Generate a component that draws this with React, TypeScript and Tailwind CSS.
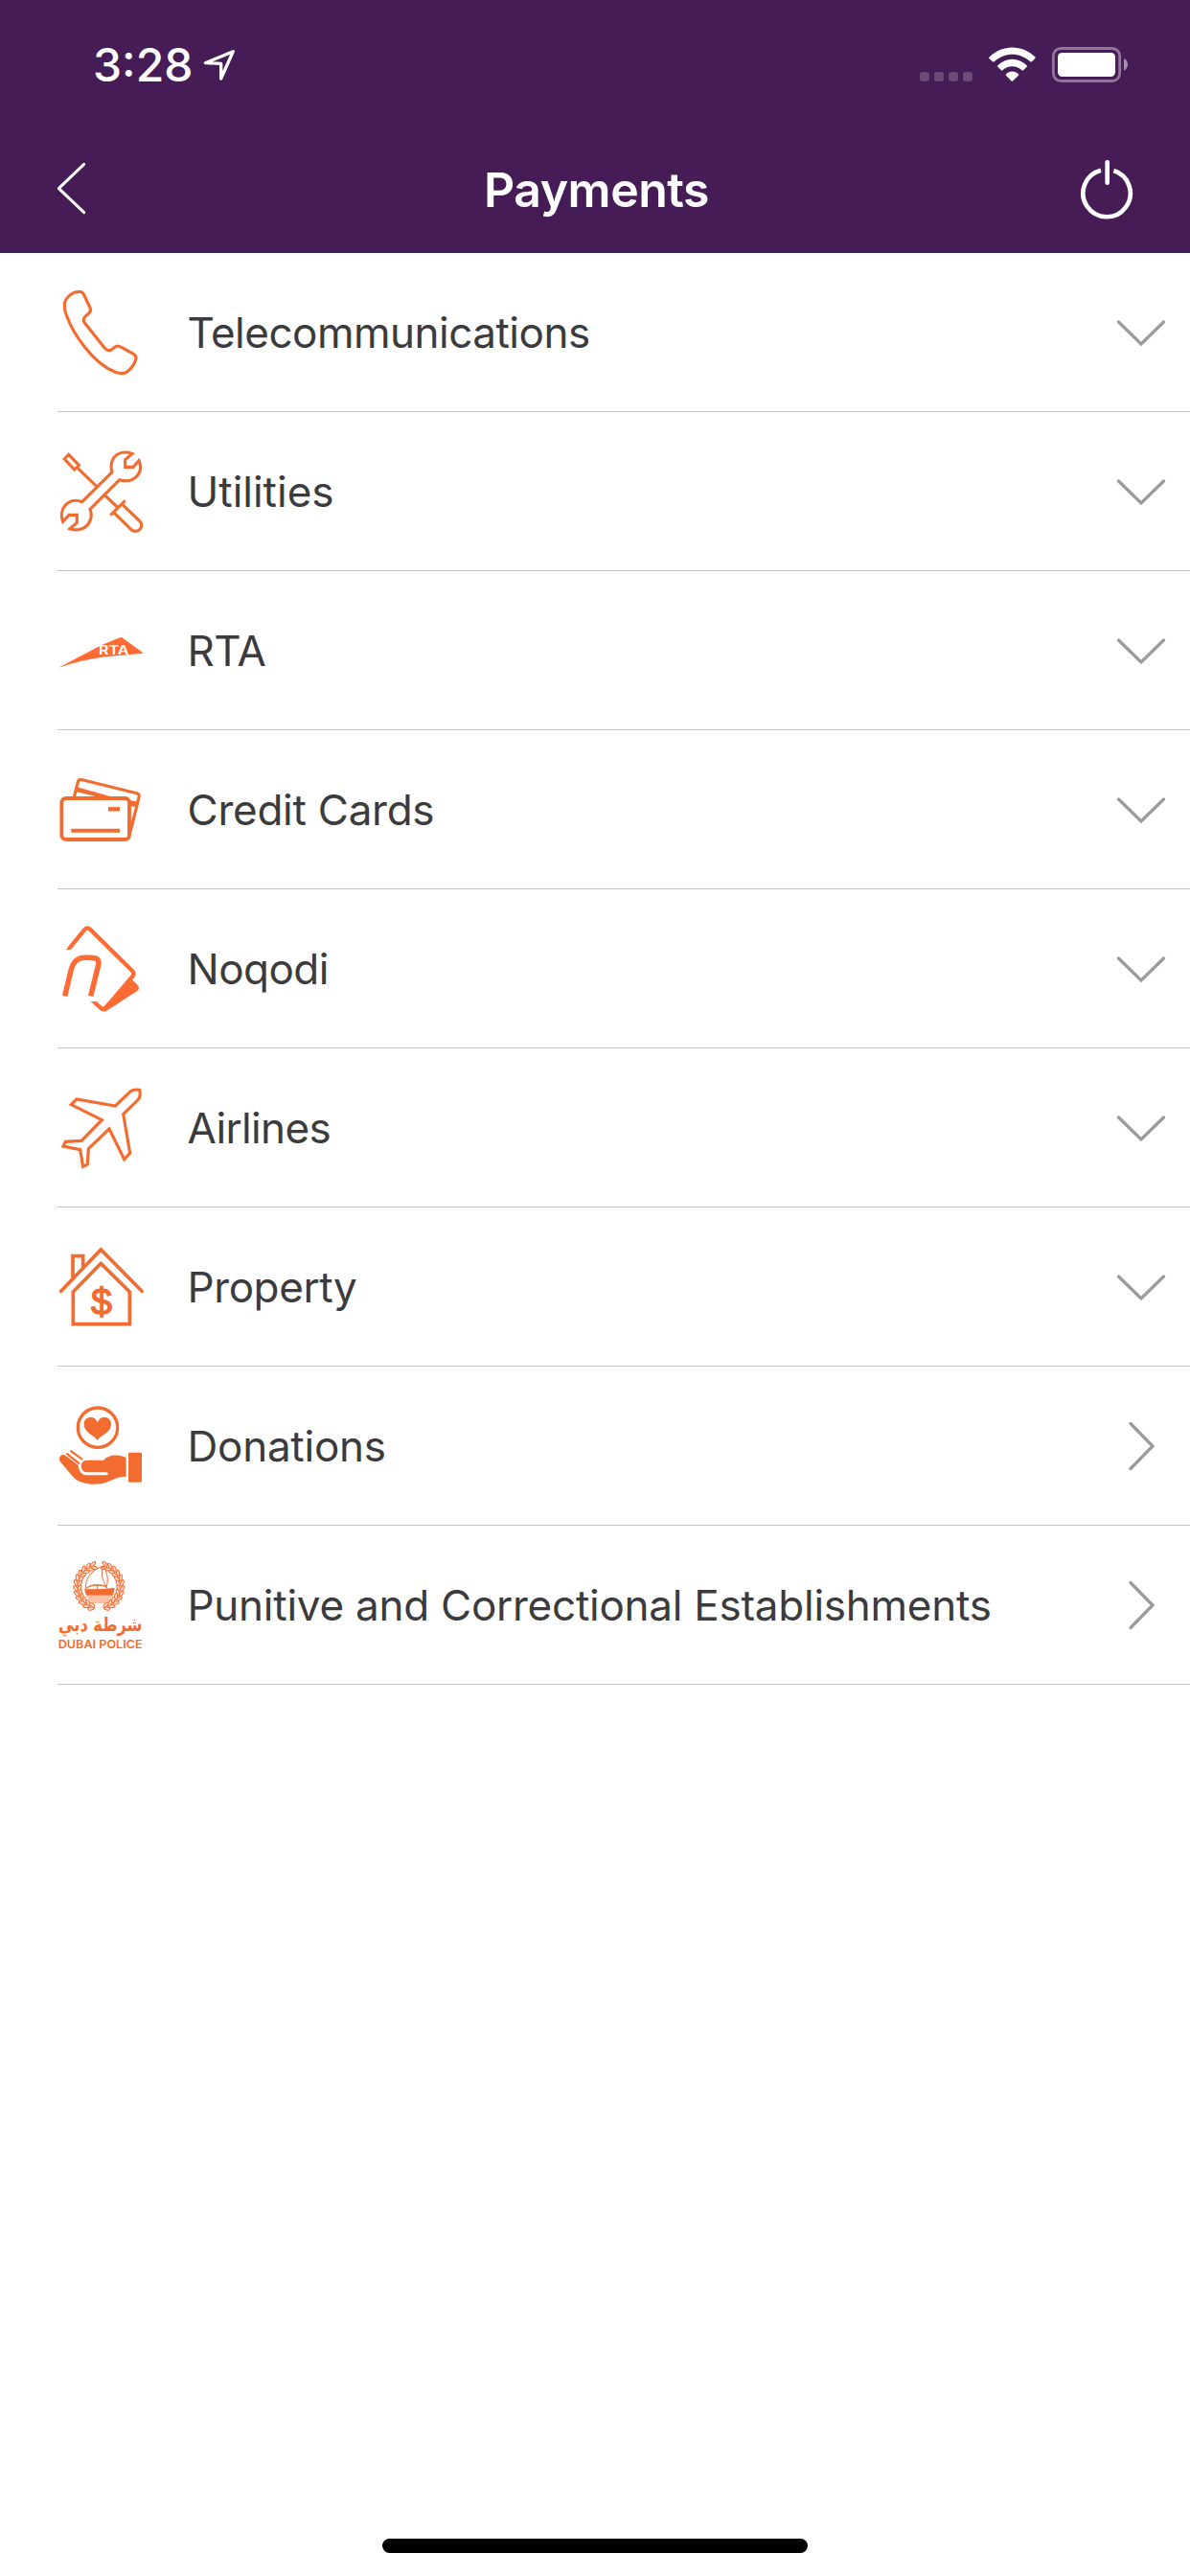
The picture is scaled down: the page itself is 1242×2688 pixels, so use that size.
import type { ReactNode } from "react";

const ORANGE = "#f26c30";
const BRIGHT_ORANGE = "#ff6b33";

interface Category {
  label: string;
  icon: ReactNode;
  expandable: boolean;
  tracking: string;
}

function PhoneIcon() {
  return (
    <svg viewBox="42 48 306 306" className="w-[102px] h-[102px]" fill="none" stroke={ORANGE} strokeWidth="9.5" strokeLinejoin="round">
      <path d="M82 113 C83 91 109 72 130 73 C136 73 139 76 142 81 L162 123 C165 130 163 137 157 142 C149 148 142 153 142 160 C141 164 143 168 146 172 L203 244 C209 252 214 257 222 257 C233 257 237 243 248 243 C253 243 258 246 262 248 L298 268 C306 273 308 280 304 289 C299 302 288 317 276 325 C266 331 252 329 241 325 C171 298 109 205 88 147 C84 137 81 126 82 113 Z" />
    </svg>
  );
}

function ToolsIcon() {
  return (
    <svg viewBox="42 546 306 306" className="w-[102px] h-[102px]" fill="none" stroke={ORANGE} strokeWidth="9.5">
      {/* screwdriver */}
      <path d="M95 583 L82 597 L113 630 L127 616 Z M120 622 L185 685 M207 709 L250 750 M226 773 L272 727 M236 764 L290 817 C299 826 312 825 319 816 C325 808 324 798 317 791 L263 739" />
      {/* wrench */}
      <path d="M137 731 L231 638 C220 602 241 576 272 576 C281 576 287 577 294 580 L272 599 V622 H297 L315 602 C323 620 320 638 308 651 C294 666 274 668 254 662 L162 754 C174 785 154 814 126 818 C116 819 107 818 99 815 L121 796 V772 H96 L77 793 C70 775 73 754 86 740 C100 726 119 724 137 731 Z" />
    </svg>
  );
}

function RtaIcon() {
  return (
    <svg viewBox="42 -36 306 306" className="w-[102px] h-[102px]">
      <path d="M63 170 L200 98 L260 74 L330 125 L210 136 C160 143 110 154 63 170 Z" fill={BRIGHT_ORANGE} />
      <text x="189" y="130" textLength="94" lengthAdjust="spacingAndGlyphs" fontSize="38" fontWeight="600" fill="#fff" className="font-['Inter',sans-serif]">
        RTA
      </text>
    </svg>
  );
}

function CardsIcon() {
  return (
    <svg viewBox="42 462 306 306" className="w-[102px] h-[102px]" fill="none" stroke={ORANGE} strokeWidth="11.5">
      <path d="M112 576 L124 528 C126 521 131 519 138 521 L308 563 C315 565 317 569 315 576 L287 688" strokeWidth="9.5" />
      <path d="M118 543 L222 572 L312 590 V606 L278 602 L262 578 H200 L118 558 Z" fill={ORANGE} stroke="none" />
      <rect x="73" y="579" width="212" height="129" rx="13" fill="#fff" />
      <path d="M219 613 H255" strokeWidth="13" />
      <path d="M103 680 H255" strokeWidth="12" />
    </svg>
  );
}

function NoqodiIcon() {
  return (
    <svg viewBox="42 30 306 306" className="w-[102px] h-[102px]" fill="none" stroke={BRIGHT_ORANGE} strokeWidth="13">
      <path d="M97 119 L144 61 Q153 50 163 60 L294 189 Q302 197 296 205 L213 303 Q204 314 195 305 L176 288" />
      <path d="M86 123 H100 L106 113 L97 112 Z M163 285 H184 L180 296 Z" fill={BRIGHT_ORANGE} stroke="none" />
      <path d="M293 216 L312 235 Q318 243 311 251 L209 317 L200 306 Z" fill={BRIGHT_ORANGE} stroke="none" />
      <path d="M83 268 L102 188 C109 161 121 149 143 148 C157 147 170 147 180 150 C188 153 190 160 188 171 L164 268" strokeWidth="16.500" />
    </svg>
  );
}

function PlaneIcon() {
  return (
    <svg viewBox="42 528 306 306" className="w-[102px] h-[102px]" fill="none" stroke={ORANGE} strokeWidth="9.5">
      <path d="M241 612 L287 568 C294 561 306 560 317 562 C320 575 318 587 311 594 L266 638 L287 760 L269 779 L222 684 L157 746 L154 795 L140 802 L131 749 L78 738 L85 724 L135 721 L199 656 L103 608 L120 591 Z" />
    </svg>
  );
}

function HouseIcon() {
  return (
    <svg viewBox="42 36 306 306" className="w-[102px] h-[102px]" fill="none" stroke={ORANGE} strokeWidth="11">
      <path d="M71 202 L196 72 L324 202" strokeLinecap="round" />
      <path d="M108 160 V92 H140 V126" />
      <path d="M109 305 V204 L196 115 L286 204 V305 Z" />
      <text x="198" y="277" textAnchor="middle" fontSize="118" fill={ORANGE} stroke={ORANGE} strokeWidth="4" className="font-['Liberation_Sans',sans-serif]">
        $
      </text>
    </svg>
  );
}

function DonationIcon() {
  return (
    <svg viewBox="42 54 306 306" className="w-[102px] h-[102px]" fill={ORANGE}>
      <circle cx="186" cy="149" r="62" fill="none" stroke={ORANGE} strokeWidth="10" />
      <path d="M185 190 C178 174 143 166 143 139 C143 113 175 107 185 133 C195 107 228 113 228 139 C228 166 192 174 185 190 Z" />
      {/* hand and cuff */}
      <path d="M66 245 C68 233 79 231 89 239 L125 267 C126 283 134 297 150 298 H210 C216 298 220 295 218 291 C214 289 208 289 201 289 H153 C142 289 134 280 134 270 C134 259 141 251 154 251 H205 C215 235 253 229 275 244 V302 C241 303 223 319 197 325 C166 329 136 324 119 312 C100 296 82 269 70 257 C66 253 65 250 66 245 Z" />
      <path d="M91 232 L126 260 M103 223 L136 247" stroke={ORANGE} strokeWidth="7" strokeLinecap="round" />
      <rect x="282" y="227" width="42" height="93" rx="4" />
    </svg>
  );
}

function PoliceIcon() {
  const leaves: ReactNode[] = [];
  for (let i = 0; i < 12; i++) {
    const angle = 18 + i * 13.2;
    for (const side of [1, -1]) {
      leaves.push(
        <g key={`${side}-${i}`} transform={`translate(190 167) scale(${side} 1) rotate(${angle})`}>
          <ellipse cx="-4" cy="-73" rx="10" ry="4.500" transform="rotate(28 -4 -73)" />
          <ellipse cx="-4" cy="-61" rx="10" ry="4.500" transform="rotate(-28 -4 -61)" />
        </g>
      );
    }
  }
  return (
    <svg viewBox="42 72 306 306" className="w-[102px] h-[102px] overflow-visible">
      <g fill="#fde0d3" stroke={ORANGE} strokeWidth="3">{leaves}</g>
      <g fill="none" stroke={ORANGE} strokeWidth="3">
        <path d="M203 102 C171 112 145 139 148 174 C163 158 191 158 214 166 C220 143 216 122 203 102 Z" />
        <path d="M203 102 C196 122 198 146 216 172 M152 172 C164 161 201 158 214 170 M185 162 V174" />
        <path d="M152 198 H232 M155 204 H228 M160 210 H224 M168 216 H216" strokeWidth="2.5" />
      </g>
      <path d="M144 175 L205 174 L239 170 L234 194 H150 Z" fill={ORANGE} />
      <text x="194" y="307" textAnchor="middle" textLength="262" lengthAdjust="spacingAndGlyphs" direction="rtl" fontSize="60" fontWeight="700" fill={ORANGE} className="font-['DejaVu_Sans',sans-serif]">
        شرطة دبي
      </text>
      <text x="62" y="360" textLength="264" lengthAdjust="spacingAndGlyphs" fontSize="37" fontWeight="600" fill={ORANGE} className="font-['Inter',sans-serif]">
        DUBAI POLICE
      </text>
    </svg>
  );
}

const categories: Category[] = [
  { label: "Telecommunications", icon: <PhoneIcon />, expandable: true, tracking: "tracking-[-0.5px]" },
  { label: "Utilities", icon: <ToolsIcon />, expandable: true, tracking: "tracking-normal" },
  { label: "RTA", icon: <RtaIcon />, expandable: true, tracking: "tracking-[-0.5px]" },
  { label: "Credit Cards", icon: <CardsIcon />, expandable: true, tracking: "tracking-[-0.25px]" },
  { label: "Noqodi", icon: <NoqodiIcon />, expandable: true, tracking: "tracking-[-0.5px]" },
  { label: "Airlines", icon: <PlaneIcon />, expandable: true, tracking: "tracking-[-0.65px]" },
  { label: "Property", icon: <HouseIcon />, expandable: true, tracking: "tracking-[-0.4px]" },
  { label: "Donations", icon: <DonationIcon />, expandable: false, tracking: "tracking-[-0.25px]" },
  {
    label: "Punitive and Correctional Establishments",
    icon: <PoliceIcon />,
    expandable: false,
    tracking: "tracking-[-0.25px]",
  },
];

function StatusBar() {
  return (
    <div className="h-[132px] pl-[97px] pr-[64px] pt-[38px] flex items-start justify-between">
      <div className="flex items-start">
        <span className="w-[115px] text-[48px] leading-[60px] font-medium whitespace-nowrap">3:28</span>
        <svg viewBox="636 150 102 105" className="w-[34px] h-[35px] mt-3" fill="none" stroke="#fff" strokeWidth="10" strokeLinejoin="round">
          <path d="M643 197 L730 161 L692 246 V199 Z" />
        </svg>
      </div>
      <svg viewBox="411 144 657 117" className="w-[219px] h-[39px] mt-[10px]" fill="#fff">
        <g opacity="0.2">
          <rect x="414" y="225" width="30" height="30" rx="9" />
          <rect x="459" y="225" width="30" height="30" rx="9" />
          <rect x="504" y="225" width="30" height="30" rx="9" />
          <rect x="549" y="225" width="30" height="30" rx="9" />
        </g>
        {/* wifi */}
        <path d="M631 179 C673 138 734 138 776 179 Q777 181 775 183 L765 193 Q763 195 760 193 C726 163 681 163 647 193 Q644 195 642 193 L631 183 Q630 181 631 179 Z" />
        <path d="M658 205 C684 179 723 179 749 205 Q751 207 749 209 L738 220 Q736 222 734 220 C715 204 691 204 673 220 Q671 222 669 220 L658 209 Q656 207 658 205 Z" />
        <path d="M684 232 C696 221 711 221 723 232 Q725 234 723 236 L706 253 Q703 256 700 253 L684 236 Q682 234 684 232 Z" />
        {/* battery */}
        <rect x="832" y="151.500" width="208" height="102" rx="24" fill="none" stroke="#fff" strokeOpacity="0.4" strokeWidth="8.500" />
        <rect x="846" y="165" width="180" height="75" rx="14" />
        <path d="M1053 183 C1069 189 1069 215 1053 221 Z" opacity="0.5" />
      </svg>
    </div>
  );
}

function NavBar() {
  return (
    <div className="h-[132px] px-[57px] flex items-center justify-between">
      <svg viewBox="171 501 102 177" className="w-[34px] h-[59px] -mt-[3px]" fill="none" stroke="#fff" strokeWidth="9" strokeLinecap="round" strokeLinejoin="round">
        <path d="M263 514 L184 590 L263 665" />
      </svg>
      <h1 className="pl-[29px] text-[50px] leading-[60px] font-semibold tracking-[-0.5px]">Payments</h1>
      <svg viewBox="909 492 180 201" className="w-[60px] h-[67px]" fill="none" stroke="#fff" strokeWidth="14">
        <path d="M981 530 A74 74 0 1 0 1021 531" />
        <path d="M1001 505 V569" strokeLinecap="round" />
      </svg>
    </div>
  );
}

function CategoryRow({ label, icon, expandable, tracking }: Category) {
  return (
    <li className="border-none flex flex-col">
      <div className="h-[165px] pl-[54px] flex">
        <div className="w-[102px] h-[166px] flex items-center shrink-0">{icon}</div>
        <div className="flex-1 h-[166px] pl-[39.5px] flex items-center">
          <span className={`text-[44px] leading-[56px] text-[#3b3b3d] whitespace-nowrap ${tracking}`}>{label}</span>
        </div>
        <div className="w-[106px] h-[166px] pl-1 flex items-center justify-center shrink-0">
          <svg
            viewBox="0 0 52 52"
            className={`w-[52px] h-[52px] ${expandable ? "" : "-rotate-90"}`}
            fill="none"
            stroke="#9b9b9b"
            strokeWidth="3.3"
            strokeLinecap="round"
          >
            <path d="M2.500 15 L26 38 L49.500 15" />
          </svg>
        </div>
      </div>
      <div className="h-px ml-[60px] bg-[#c4c4c6]" />
    </li>
  );
}

export default function App() {
  return (
    <div className="w-[1242px] h-[2688px] bg-white flex flex-col overflow-hidden font-['Inter',sans-serif]">
      <header className="h-[264px] bg-[#461c56] text-white shrink-0">
        <StatusBar />
        <NavBar />
      </header>
      <ul>
        {categories.map((c) => (
          <CategoryRow key={c.label} {...c} />
        ))}
      </ul>
      {/* Home indicator */}
      <div className="mt-auto mb-6 mx-auto w-[444px] h-[15px] rounded-full bg-black" />
    </div>
  );
}
